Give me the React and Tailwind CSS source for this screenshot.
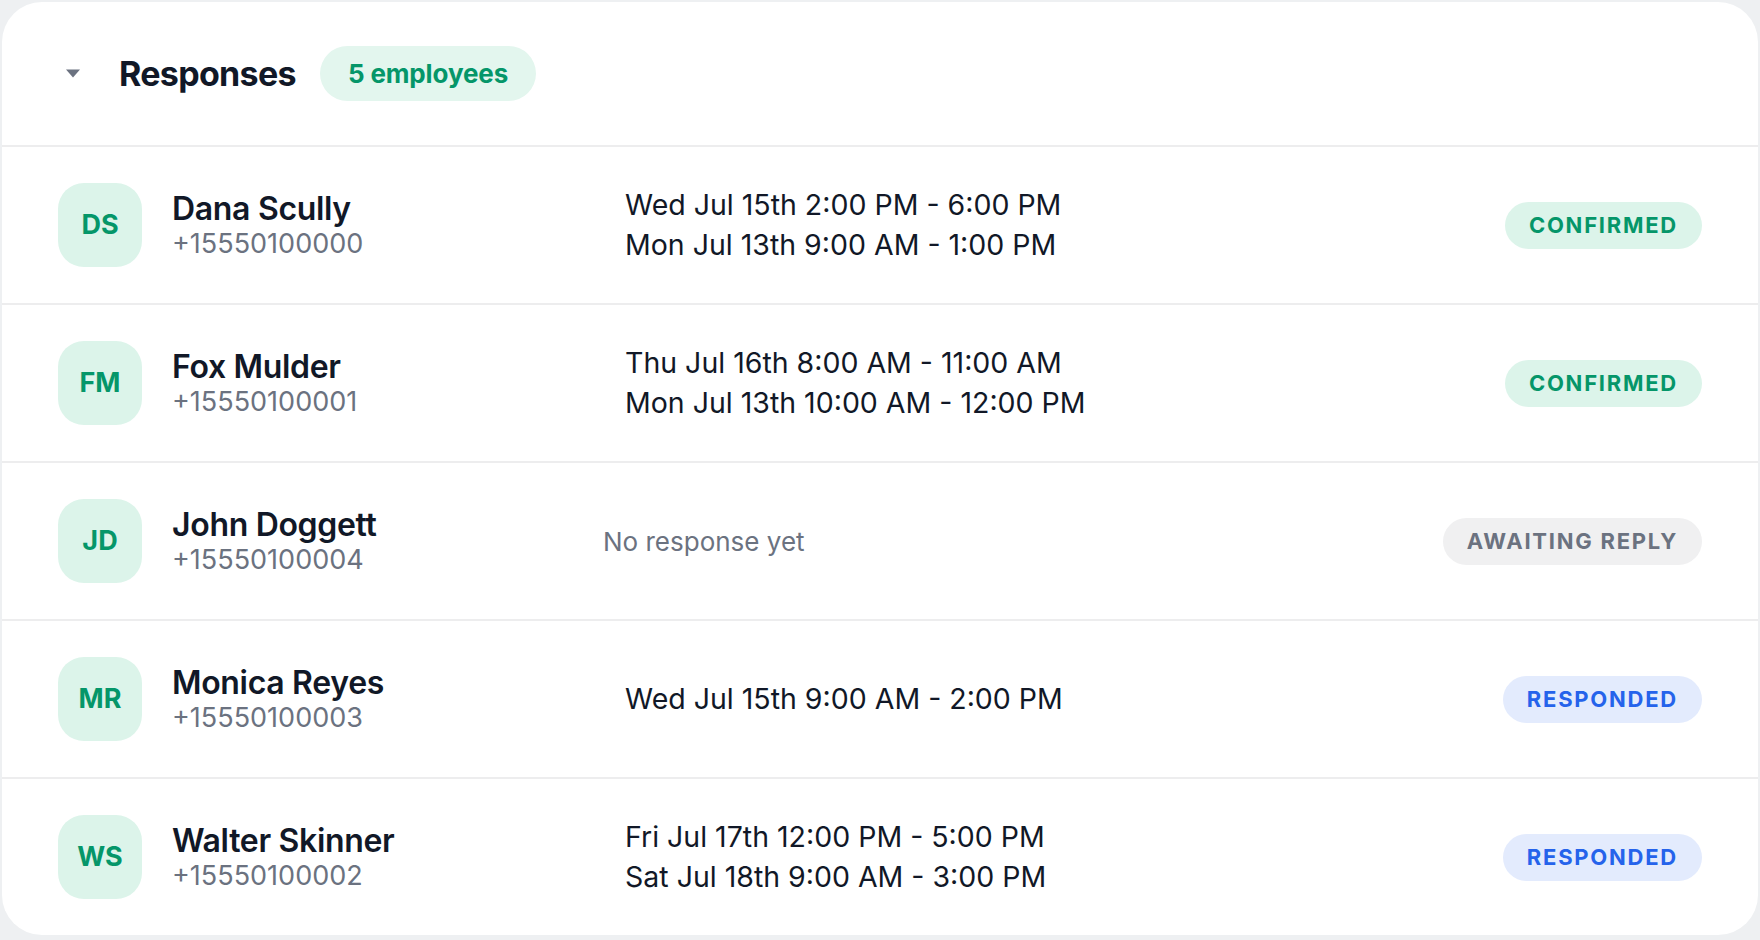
import { useState } from "react";

const people = [
  {
    initials: "DS",
    name: "Dana Scully",
    phone: "+15550100000",
    slots: ["Wed Jul 15th 2:00 PM - 6:00 PM", "Mon Jul 13th 9:00 AM - 1:00 PM"],
    status: "confirmed",
  },
  {
    initials: "FM",
    name: "Fox Mulder",
    phone: "+15550100001",
    slots: ["Thu Jul 16th 8:00 AM - 11:00 AM", "Mon Jul 13th 10:00 AM - 12:00 PM"],
    status: "confirmed",
  },
  {
    initials: "JD",
    name: "John Doggett",
    phone: "+15550100004",
    slots: [],
    status: "awaiting",
  },
  {
    initials: "MR",
    name: "Monica Reyes",
    phone: "+15550100003",
    slots: ["Wed Jul 15th 9:00 AM - 2:00 PM"],
    status: "responded",
  },
  {
    initials: "WS",
    name: "Walter Skinner",
    phone: "+15550100002",
    slots: ["Fri Jul 17th 12:00 PM - 5:00 PM", "Sat Jul 18th 9:00 AM - 3:00 PM"],
    status: "responded",
  },
];

const pills = {
  confirmed: { label: "Confirmed", cls: "bg-[#dcf4ea] text-[#059669]" },
  awaiting: { label: "Awaiting Reply", cls: "bg-[#f0f0f1] text-[#6b7280]" },
  responded: { label: "Responded", cls: "bg-[#e3ebfd] text-[#2563eb]" },
};

function StatusPill({ status }) {
  const p = pills[status];
  return (
    <span
      className={`inline-flex h-[47px] items-center rounded-full px-[24px] text-[22px] font-bold uppercase tracking-[0.08em] ${p.cls}`}
    >
      {p.label}
    </span>
  );
}

function Row({ person }) {
  return (
    <div className="flex h-[158px] items-center border-t-2 border-[#ededee] pl-[56px] pr-[56px]">
      <div className="flex w-[545px] items-center gap-[30px]">
        <div className="flex h-[84px] w-[84px] items-center justify-center rounded-[26px] bg-[#dcf4ea] text-[27px] font-bold text-[#059669]">
          {person.initials}
        </div>
        <div className="flex flex-col">
          <span className="text-[32px] font-semibold leading-[38px] tracking-[-0.01em] text-[#111827]">
            {person.name}
          </span>
          <span className="text-[27px] leading-[32px] text-[#6b7280]">{person.phone}</span>
        </div>
      </div>
      <div className="flex-1">
        {person.slots.length === 0 ? (
          <span className="text-[26px] text-[#6b7280]">No response yet</span>
        ) : (
          <div className="flex flex-col pl-[22px]">
            {person.slots.map((s) => (
              <span key={s} className="text-[28.5px] leading-[40px] text-[#111827]">
                {s}
              </span>
            ))}
          </div>
        )}
      </div>
      <StatusPill status={person.status} />
    </div>
  );
}

export default function App() {
  const [open, setOpen] = useState(true);
  return (
    <div className="h-[940px] w-[1760px] bg-[#eef0f2] p-[2px] font-['Inter',sans-serif]">
      <div className="overflow-hidden rounded-[40px] bg-white">
        <div className="flex h-[143px] items-center pl-[63px]">
          <button onClick={() => setOpen(!open)} className="flex h-[16px] w-[16px] items-center justify-center">
            <svg width="16" height="9" viewBox="0 0 16 9">
              <path d="M1 0.5 H15 L8 8.5 Z" fill="#6b7280" />
            </svg>
          </button>
          <h2 className="ml-[38px] text-[34px] font-bold tracking-[-0.02em] text-[#111827]">Responses</h2>
          <span className="ml-[24px] inline-flex h-[55px] items-center rounded-full bg-[#e3f6ee] px-[28px] text-[26px] font-bold tracking-[-0.005em] text-[#059669]">
            5 employees
          </span>
        </div>
        {open && people.map((p) => <Row key={p.initials} person={p} />)}
      </div>
    </div>
  );
}
